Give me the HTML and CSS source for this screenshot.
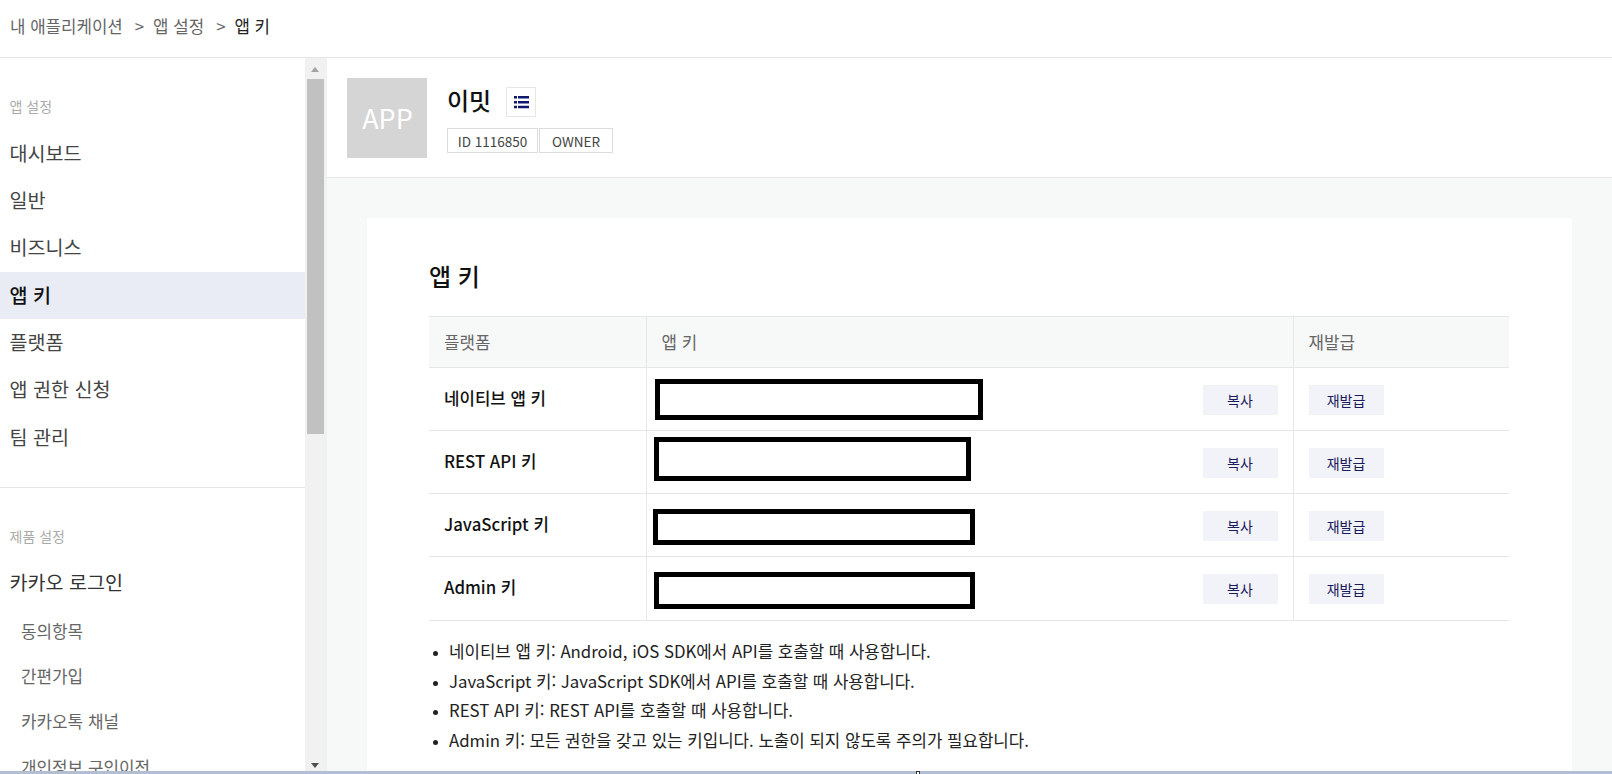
FILE: index.html
```html
<!DOCTYPE html>
<html lang="ko">
<head>
<meta charset="utf-8">
<title>앱 키</title>
<link rel="stylesheet" href="styles.css">
</head>
<body>
<header class="topbar">
  <span>내 애플리케이션</span><span class="sep">&gt;</span><span>앱 설정</span><span class="sep">&gt;</span><span class="here">앱 키</span>
</header>
<div class="shell">
  <aside class="side">
    <nav class="side-scroll">
      <section class="side-group">
        <h2 class="side-cap">앱 설정</h2>
        <a class="side-item">대시보드</a>
        <a class="side-item">일반</a>
        <a class="side-item">비즈니스</a>
        <a class="side-item active">앱 키</a>
        <a class="side-item">플랫폼</a>
        <a class="side-item">앱 권한 신청</a>
        <a class="side-item">팀 관리</a>
      </section>
      <section class="side-group second">
        <h2 class="side-cap">제품 설정</h2>
        <a class="side-item strong">카카오 로그인</a>
        <a class="side-sub">동의항목</a>
        <a class="side-sub">간편가입</a>
        <a class="side-sub">카카오톡 채널</a>
        <a class="side-sub">개인정보 구인이전</a>
      </section>
    </nav>
    <div class="sbar">
      <div class="sbar-up"></div>
      <div class="sbar-thumb"></div>
      <div class="sbar-fill"></div>
      <div class="sbar-down"></div>
    </div>
  </aside>
  <main class="main">
    <div class="app-head">
      <div class="app-logo">APP</div>
      <div class="app-info">
        <div class="app-title">
          <h1 class="app-name">이밋</h1>
          <button class="app-menu" aria-label="목록">
            <svg width="15" height="13" viewBox="0 0 15 13"><path fill="#10186e" d="M0 0h3v2.6H0zM4 0h11v2.6H4zM0 5h3v2.6H0zM4 5h11v2.6H4zM0 9.7h3v2.6H0zM4 9.7h11v2.6H4z"/></svg>
          </button>
        </div>
        <div class="app-tags"><span class="tag tag-id">ID 1116850</span><span class="tag tag-owner">OWNER</span></div>
      </div>
    </div>
    <div class="content">
      <article class="card">
        <h2 class="card-title">앱 키</h2>
        <table class="keys">
          <thead>
            <tr><th class="c1">플랫폼</th><th class="c2">앱 키</th><th class="c3">재발급</th></tr>
          </thead>
          <tbody>
            <tr>
              <td class="name">네이티브 앱 키</td>
              <td class="key"><span class="redact r1"></span><div class="key-act"><button class="btn">복사</button></div></td>
              <td class="re"><button class="btn">재발급</button></td>
            </tr>
            <tr>
              <td class="name">REST API 키</td>
              <td class="key"><span class="redact r2"></span><div class="key-act"><button class="btn">복사</button></div></td>
              <td class="re"><button class="btn">재발급</button></td>
            </tr>
            <tr>
              <td class="name">JavaScript 키</td>
              <td class="key"><span class="redact r3"></span><div class="key-act"><button class="btn">복사</button></div></td>
              <td class="re"><button class="btn">재발급</button></td>
            </tr>
            <tr class="last">
              <td class="name">Admin 키</td>
              <td class="key"><span class="redact r4"></span><div class="key-act"><button class="btn">복사</button></div></td>
              <td class="re"><button class="btn">재발급</button></td>
            </tr>
          </tbody>
        </table>
        <ul class="notes">
          <li>네이티브 앱 키: Android, iOS SDK에서 API를 호출할 때 사용합니다.</li>
          <li>JavaScript 키: JavaScript SDK에서 API를 호출할 때 사용합니다.</li>
          <li>REST API 키: REST API를 호출할 때 사용합니다.</li>
          <li>Admin 키: 모든 권한을 갖고 있는 키입니다. 노출이 되지 않도록 주의가 필요합니다.</li>
        </ul>
      </article>
    </div>
  </main>
</div>
<div class="taskbar"><span class="cursor"></span></div>
</body>
</html>
```
FILE: styles.css
```css
* { box-sizing: border-box; }
html, body { margin: 0; height: 774px; overflow: hidden; }
body {
  font-family: "Noto Sans CJK KR", "Noto Sans", sans-serif;
  color: #1e1e1e;
  background: #fff;
  font-size: 16px;
}
h1, h2 { margin: 0; font-weight: 500; }
button { font-family: inherit; border: 0; padding: 0; cursor: pointer; }

.topbar {
  height: 58px;
  padding: 0 0 6px 10px;
  display: flex;
  align-items: center;
  border-bottom: 1px solid #e6e6e6;
  color: #666;
  font-size: 16.8px;
}
.sep { margin: 0 9px 0 12px; }
.here { color: #222; }

.shell { display: flex; height: 716px; overflow: hidden; }
.side { width: 327px; flex: none; display: flex; }
.side-scroll { width: 305px; height: 713px; flex: none; overflow: hidden; }
.side-group { padding-top: 36px; }
.side-group.second { border-top: 1px solid #e6e6e6; margin-top: 26px; padding-top: 36px; }
.side-cap { font-size: 14px; font-weight: 400; color: #aaa; line-height: 24px; margin-bottom: 11.5px; padding-left: 9.5px; }
.second .side-cap { margin-bottom: 10.5px; }
.side-item {
  display: block;
  height: 47.4px;
  line-height: 45px;
  padding-left: 9.5px;
  font-size: 19.6px;
  color: #444;
}
.side-item.active { background: #e9ecf4; color: #111; font-weight: 500; }
.side-item.strong { color: #333; margin-bottom: 1.5px; }
.side-sub {
  display: block;
  height: 45.4px;
  line-height: 45px;
  padding-left: 21px;
  font-size: 16.9px;
  color: #666;
}

.sbar { width: 22px; flex: none; height: 713px; background: #f1f1f1; padding: 0 3px 0 2px; display: flex; flex-direction: column; align-items: stretch; }
.sbar-up { height: 21px; flex: none; position: relative; }
.sbar-up::after {
  content: ""; position: absolute; left: 4px; top: 9px;
  border-left: 4.5px solid transparent; border-right: 4.5px solid transparent; border-bottom: 5px solid #a3a3a3;
}
.sbar-thumb { height: 355px; flex: none; background: #c1c1c1; }
.sbar-fill { flex: 1; }
.sbar-down { height: 17px; flex: none; position: relative; }
.sbar-down::after {
  content: ""; position: absolute; left: 4px; top: 9px;
  border-left: 4.5px solid transparent; border-right: 4.5px solid transparent; border-top: 5px solid #505050;
}

.main { flex: 1; min-width: 0; display: flex; flex-direction: column; background: #f7f8f8; }
.app-head {
  height: 120px;
  flex: none;
  background: #fff;
  border-bottom: 1px solid #e6e6e6;
  padding: 20px 0 0 20px;
  display: flex;
  gap: 20px;
}
.app-logo {
  width: 80px; height: 80px;
  background: #d5d5d5;
  color: #fff;
  font-size: 27px;
  line-height: 80px;
  padding-left: 1px;
  text-align: center;
}
.app-title { display: flex; align-items: flex-start; gap: 15px; height: 30px; margin: 9px 0 11px; }
.app-name { font-size: 24px; font-weight: 500; color: #111; line-height: 26px; }
.app-menu {
  width: 30px; height: 30px;
  background: #fff;
  border: 1px solid #e6e6e6;
  display: flex; align-items: center; justify-content: center;
}
.app-tags { display: flex; gap: 1px; }
.tag {
  height: 25px;
  border: 1px solid #dcdcdc;
  font-size: 13.5px;
  line-height: 24px;
  color: #444;
  text-align: center;
}
.tag-id { width: 91px; }
.tag-owner { width: 74px; }

.content { flex: 1; padding: 40px 40px 0; min-height: 0; }
.card { background: #fff; padding: 36px 63px 0 62px; height: 556px; overflow: hidden; }
.card-title { font-size: 24px; line-height: 44px; color: #111; margin-bottom: 18px; }

.keys { width: 1080px; border-collapse: collapse; table-layout: fixed; }
.keys th, .keys td { padding: 0; border-top: 1px solid #e6e6e6; border-bottom: 1px solid #e6e6e6; vertical-align: top; text-align: left; }
.keys th + th, .keys td + td { border-left: 1px solid #e6e6e6; }
.keys th {
  height: 51px;
  background: #f7f8f8;
  font-weight: 400;
  color: #666;
  padding-left: 15px;
  line-height: 50px;
  font-size: 16.8px;
}
.c1 { width: 217px; }
.c3 { width: 216px; }
.keys td { height: 63px; }
.keys .last td { height: 64px; }
.keys td.name { padding-left: 15px; font-size: 16.8px; font-weight: 500; line-height: 60px; color: #111; }
.keys td.key { position: relative; padding: 17px 15px 0 0; }
.key-act { display: flex; justify-content: flex-end; }
.keys td.re { padding: 17px 0 0 15px; }
.btn {
  display: block;
  width: 75px; height: 30px;
  background: #f2f3f9;
  color: #1b1b5c;
  font-size: 14px;
  line-height: 30px;
}
.redact { position: absolute; border: 5px solid #000; background: #fff; }
.r1 { left: 8px; top: 11px; width: 328px; height: 41px; }
.r2 { left: 7px; top: 6px; width: 317px; height: 44px; }
.r3 { left: 6px; top: 15px; width: 322px; height: 36px; }
.r4 { left: 7px; top: 15px; width: 321px; height: 37px; }

.notes { margin: 16px 0 0; padding: 0 0 0 20px; font-size: 16.8px; color: #222; line-height: 29.7px; }
.notes li::marker { font-size: 12px; }

.taskbar { position: fixed; left: 0; right: 0; bottom: 0; height: 3px; background: #b4bed2; }
.cursor { position: absolute; left: 916px; top: 0; width: 4px; height: 3px; background: #fff; border: 1px solid #333; border-bottom: 0; }
```
